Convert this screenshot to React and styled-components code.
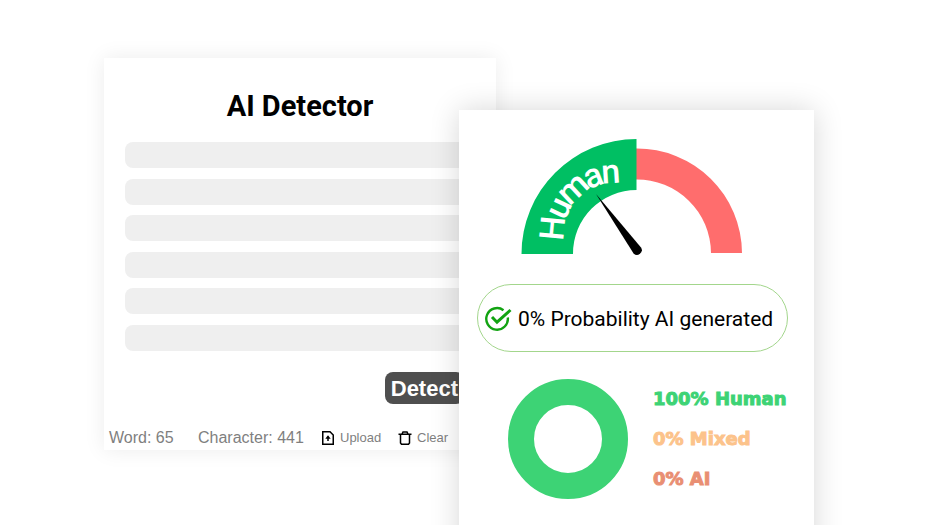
import styled, { createGlobalStyle } from 'styled-components';

const lines = [1, 2, 3, 4, 5, 6];

const results = [
  { label: '100% Human', color: '#3dd375' },
  { label: '0% Mixed', color: '#fcc38b' },
  { label: '0% AI', color: '#e98f73' },
];

export default function App() {
  return (
    <>
      <GlobalStyle />
      <Stage>
        <DetectorCard />
        <ResultCard />
      </Stage>
    </>
  );
}

function DetectorCard() {
  return (
    <Detector>
      <Title>AI Detector</Title>
      <Lines>
        {lines.map((line) => (
          <Line key={line} />
        ))}
      </Lines>
      <DetectButton type="button">Detect</DetectButton>
      <Footer>
        <Count $width="89px">Word: 65</Count>
        <Count $width="123px">Character: 441</Count>
        <Action type="button" $width="77px">
          <UploadIcon />
          Upload
        </Action>
        <Action type="button">
          <TrashIcon />
          Clear
        </Action>
      </Footer>
    </Detector>
  );
}

function ResultCard() {
  return (
    <Result>
      <Gauge />
      <Verdict>
        <CheckIcon />
        0% Probability AI generated
      </Verdict>
      <Summary>
        <Donut />
        <Legend>
          {results.map(({ label, color }) => (
            <LegendItem key={label} $color={color}>
              {label}
            </LegendItem>
          ))}
        </Legend>
      </Summary>
    </Result>
  );
}

function Gauge() {
  return (
    <GaugeSvg width="222" height="118" viewBox="0 0 222 118">
      <path d="M115 10.500A105 105 0 0 1 221 115H190A74 74 0 0 0 115 41.500Z" fill="#ff6d6d" />
      <path d="M0.500 116A115 115 0 0 1 115.500 1V52A63.500 63.500 0 0 0 52 116Z" fill="#00bf63" />
      <path id="gauge-arc" d="M31 116V96A63 63 0 0 1 94 33H120" fill="none" />
      <GaugeText dy="12">
        <textPath href="#gauge-arc" startOffset="14">
          Human
        </textPath>
      </GaugeText>
      <path d="M75 56L120 109.500A4.800 4.800 0 0 1 112.600 115.500Z" fill="#000" />
    </GaugeSvg>
  );
}

function Donut() {
  return (
    <svg width="120" height="120" viewBox="0 0 120 120">
      <circle cx="60" cy="60" r="47" fill="none" stroke="#3dd375" strokeWidth="26" />
    </svg>
  );
}

function CheckIcon() {
  return (
    <svg width="27" height="27" viewBox="0 0 27 27" fill="none" stroke="#12a312">
      <path d="M18.500 4.200A10.800 10.800 0 1 0 22.800 11.500" strokeWidth="2.400" />
      <path d="M7 11L12 16.200L25.500 4" strokeWidth="3" />
    </svg>
  );
}

function UploadIcon() {
  return (
    <svg width="14" height="14" viewBox="0 0 14 14" fill="none" stroke="#000" strokeWidth="1.500">
      <path d="M1.750 0.750H9L12.250 4V13.250H1.750Z" />
      <path d="M7 10V5.500" />
      <path d="M4.300 7.700L7 4.300L9.700 7.700Z" fill="#000" stroke="none" />
    </svg>
  );
}

function TrashIcon() {
  return (
    <svg width="14" height="14" viewBox="0 0 14 14" fill="none" stroke="#000" strokeWidth="1.500">
      <path d="M0.500 3.250H13.500M4 3L5 0.900H9L10 3M2.500 3.500V12L3.500 13.250H10.500L11.500 12V3.500" />
    </svg>
  );
}

const GlobalStyle = createGlobalStyle`
  * {
    box-sizing: border-box;
  }

  body {
    margin: 0;
    background: #fff;
  }
`;

const Stage = styled.main`
  display: grid;
  grid-template-columns: 392fr 318fr;
  align-items: start;
  height: 100vh;
  padding: 58px 121px 0 104px;
  overflow: hidden;
`;

const Card = styled.section`
  background: #fff;
  display: flex;
  flex-direction: column;
`;

const Detector = styled(Card)`
  padding: 28px 0 0 21px;
  box-shadow: 0 0 20px rgba(0, 0, 0, 0.08);
`;

/* Sits over the right edge of the detector card */
const Result = styled(Card)`
  position: relative;
  align-items: center;
  margin: 52px 0 0 -37px;
  padding: 28px 18px 60px;
  box-shadow: 0 0 28px rgba(0, 0, 0, 0.16);
`;

const Title = styled.h1`
  margin: 0 0 16px;
  padding-right: 21px;
  font: 700 29px/40px Roboto, sans-serif;
  text-align: center;
  color: #000;
`;

const Lines = styled.div`
  display: flex;
  flex-direction: column;
  justify-content: space-between;
  height: 209px;
`;

const Line = styled.div`
  height: 26px;
  border-radius: 8px;
  background: #efefef;
`;

const DetectButton = styled.button`
  align-self: flex-end;
  height: 32px;
  margin: 21px 32px 0 0;
  padding: 1px 6px 0;
  border: 0;
  border-radius: 8px;
  background: #4f4f4f;
  color: #fff;
  font: 700 22px/32px 'Liberation Sans', Arial, sans-serif;
`;

const Footer = styled.div`
  display: flex;
  align-items: center;
  height: 24px;
  margin: 22px 0 0 -16px;
  font-family: 'Liberation Sans', Arial, sans-serif;
  color: #7f7f7f;
`;

const Count = styled.span`
  width: ${({ $width }) => $width};
  font-size: 16px;
  white-space: nowrap;
`;

const Action = styled.button`
  display: flex;
  align-items: center;
  gap: 5px;
  width: ${({ $width }) => $width || 'auto'};
  padding: 0;
  border: 0;
  background: none;
  color: inherit;
  font: 13px/16px 'Liberation Sans', Arial, sans-serif;
`;

const GaugeSvg = styled.svg`
  margin-right: 10px;
`;

const GaugeText = styled.text`
  font: 500 34px Roboto, sans-serif;
  fill: #fff;
`;

const Verdict = styled.p`
  display: flex;
  align-items: center;
  align-self: stretch;
  gap: 6px;
  height: 68px;
  margin: 28px 8px 0 0;
  padding: 2px 7px 0;
  border: 1px solid #a3d68c;
  border-radius: 34px;
  font: 21px/28px Roboto, sans-serif;
  color: #000;
  white-space: nowrap;
`;

const Summary = styled.div`
  display: flex;
  align-items: center;
  align-self: stretch;
  gap: 25px;
  margin: 27px 0 0 31px;
`;

const Legend = styled.ul`
  display: flex;
  flex-direction: column;
  gap: 16px;
  margin: 0;
  padding: 0;
  list-style: none;
`;

const LegendItem = styled.li`
  font: 700 18px/24px 'DejaVu Sans', Verdana, sans-serif;
  color: ${({ $color }) => $color};
  -webkit-text-stroke: 1px ${({ $color }) => $color};
  white-space: nowrap;
`;
